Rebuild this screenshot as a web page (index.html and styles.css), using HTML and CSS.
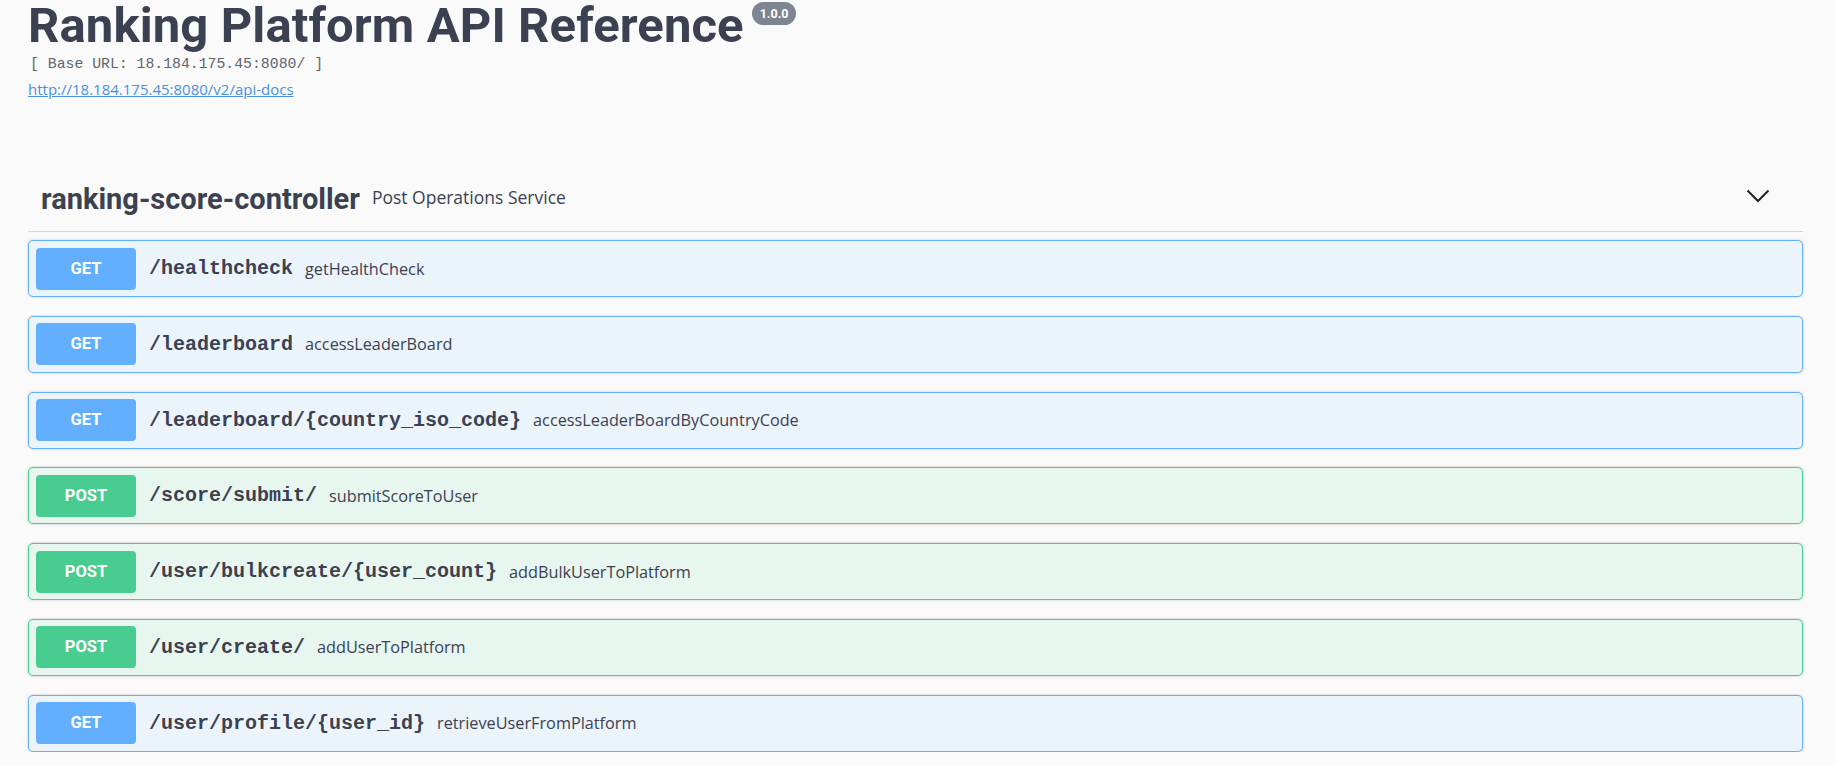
FILE: index.html
```html
<!DOCTYPE html>
<html lang="en">
<head>
<meta charset="utf-8">
<title>Ranking Platform API Reference</title>
<link rel="stylesheet" href="styles.css">
</head>
<body>
<div class="wrapper">
  <div class="info">
    <div class="title-row">
      <h2 class="title">Ranking Platform API Reference</h2>
      <span class="version">1.0.0</span>
    </div>
    <pre class="base-url">[ Base URL: 18.184.175.45:8080/ ]</pre>
    <a class="spec-link" href="#">http://18.184.175.45:8080/v2/api-docs</a>
  </div>

  <div class="tag-section">
    <div class="tag-header">
      <div class="tag-title">
        <span class="tag-name">ranking-score-controller</span>
        <span class="tag-desc">Post Operations Service</span>
      </div>
      <svg class="chevron" width="24" height="14" viewBox="0 0 24 14" aria-hidden="true">
        <polyline points="1.5,1.5 12,12 22.5,1.5" fill="none" stroke="#222" stroke-width="2"/>
      </svg>
    </div>

    <div class="ops">
      <div class="op op-get">
        <span class="method">GET</span>
        <span class="path">/healthcheck</span>
        <span class="summary">getHealthCheck</span>
      </div>
      <div class="op op-get">
        <span class="method">GET</span>
        <span class="path">/leaderboard</span>
        <span class="summary">accessLeaderBoard</span>
      </div>
      <div class="op op-get">
        <span class="method">GET</span>
        <span class="path">/leaderboard/{country_iso_code}</span>
        <span class="summary">accessLeaderBoardByCountryCode</span>
      </div>
      <div class="op op-post">
        <span class="method">POST</span>
        <span class="path">/score/submit/</span>
        <span class="summary">submitScoreToUser</span>
      </div>
      <div class="op op-post">
        <span class="method">POST</span>
        <span class="path">/user/bulkcreate/{user_count}</span>
        <span class="summary">addBulkUserToPlatform</span>
      </div>
      <div class="op op-post">
        <span class="method">POST</span>
        <span class="path">/user/create/</span>
        <span class="summary">addUserToPlatform</span>
      </div>
      <div class="op op-get">
        <span class="method">GET</span>
        <span class="path">/user/profile/{user_id}</span>
        <span class="summary">retrieveUserFromPlatform</span>
      </div>
    </div>
  </div>
</div>
</body>
</html>
```

FILE: styles.css
```css
* { box-sizing: border-box; }

html, body {
  margin: 0;
  padding: 0;
  background: #fafafa;
  overflow: hidden;
}

body {
  font-family: "Open Sans", "Noto Sans", sans-serif;
  color: #3b4151;
}

.wrapper {
  padding: 0 33px 0 28px;
}

.info {
  display: flex;
  flex-direction: column;
  align-items: flex-start;
}

.title-row {
  display: flex;
  align-items: flex-start;
}

.title {
  margin: 0;
  font-family: Roboto, "Noto Sans", sans-serif;
  font-weight: 700;
  font-size: 49px;
  line-height: 52px;
  color: #3b4151;
  letter-spacing: 0.1px;
}

.version {
  margin: 2px 0 0 8px;
  height: 23px;
  line-height: 23px;
  padding: 0 8px;
  border-radius: 57px;
  background: #7d8492;
  color: #fff;
  font-family: Roboto, "Noto Sans", sans-serif;
  font-weight: 700;
  font-size: 12.5px;
}

.base-url {
  margin: 3px 0 0 2px;
  font-family: "Liberation Mono", "DejaVu Sans Mono", monospace;
  font-size: 14.8px;
  line-height: 18px;
  color: #60646c;
}

.spec-link {
  margin-top: 6px;
  font-family: "Open Sans", sans-serif;
  font-size: 15px;
  line-height: 20px;
  color: #4990e2;
  text-decoration: underline;
}

.tag-section {
  margin-top: 61px;
}

.tag-header {
  display: flex;
  align-items: center;
  height: 72px;
  padding: 0 33px 0 13px;
  border-bottom: 1px solid #d6d7db;
}

.tag-title {
  flex: 1;
  display: flex;
  align-items: center;
  gap: 12px;
  padding-top: 6px;
}

.tag-name {
  font-family: Roboto, "Noto Sans", sans-serif;
  font-weight: 700;
  font-size: 29px;
  color: #3b4151;
}

.tag-desc {
  margin-bottom: 4px;
  font-family: "Open Sans", sans-serif;
  font-size: 17.5px;
  color: #3b4151;
}

.chevron {
  display: block;
}

.ops {
  display: flex;
  flex-direction: column;
  gap: 18.75px;
  margin-top: 8px;
}

.op {
  display: flex;
  align-items: center;
  height: 57px;
  padding: 0 7px;
  border: 1px solid;
  border-radius: 5px;
  box-shadow: 0 0 3px rgba(0, 0, 0, 0.19);
}

.op-get {
  background: #ebf3fb;
  border-color: #61affe;
}

.op-post {
  background: #e8f6f0;
  border-color: #49cc90;
}

.method {
  width: 100px;
  height: 42px;
  line-height: 42px;
  text-align: center;
  border-radius: 4px;
  color: #fff;
  font-family: Roboto, "Noto Sans", sans-serif;
  font-weight: 700;
  font-size: 16.5px;
}

.op-get .method { background: #61affe; }
.op-post .method { background: #49cc90; }

.path {
  margin-left: 13px;
  font-family: "Liberation Mono", "DejaVu Sans Mono", monospace;
  font-weight: 700;
  font-size: 20px;
  color: #3b4151;
}

.summary {
  margin-left: 12px;
  font-family: "Open Sans", sans-serif;
  font-size: 16.25px;
  color: #3b4151;
}
```
